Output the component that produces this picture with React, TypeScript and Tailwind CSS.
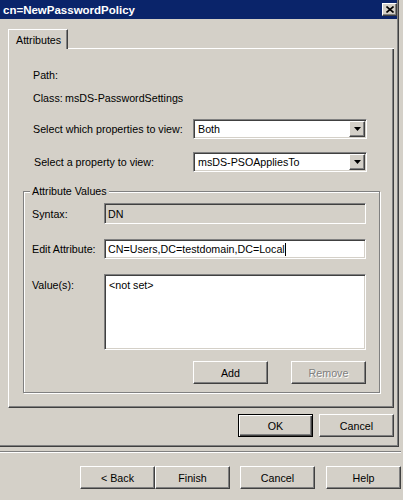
import type { ReactNode } from "react";

// Classic Win2000 chrome: raised buttons, sunken fields, etched group box
const raised =
    "border border-t-white border-l-white border-r-[#404040] border-b-[#404040] shadow-[inset_-1px_-1px_0_#808080]";
const sunken =
    "border border-t-[#808080] border-l-[#808080] border-r-white border-b-white shadow-[inset_1px_1px_0_#404040,inset_-1px_-1px_0_#d4d0c8]";

function Btn({ children, w = "w-[75px]", isDefault = false, disabled = false, className = "" }: {
    children: ReactNode;
    w?: string;
    isDefault?: boolean;
    disabled?: boolean;
    className?: string;
}) {
    const frame = isDefault
        ? "border border-black shadow-[inset_1px_1px_0_#fff,inset_-1px_-1px_0_#404040,inset_-2px_-2px_0_#808080]"
        : raised;
    return (
        <div className={`${w} h-[23px] shrink-0 flex items-center justify-center bg-[#d4d0c8] ${frame} ${className}`}>
            <span className={disabled ? "text-[#808080] [text-shadow:1px_1px_0_#fff]" : "text-black"}>{children}</span>
        </div>
    );
}

function DropArrow() {
    return (
        <svg width="7" height="4" viewBox="0 0 7 4">
            <polygon points="0,0 7,0 3.5,4" fill="#000" />
        </svg>
    );
}

function Select({ value }: { value: string }) {
    return (
        <div className={`w-[174px] h-[20px] p-[1px] bg-white flex items-center ${sunken}`}>
            <span className="flex-1 pl-[3px] leading-[14px]">{value}</span>
            <div className={`w-[16px] h-[16px] flex items-center justify-center bg-[#d4d0c8] ${raised}`}>
                <DropArrow />
            </div>
        </div>
    );
}

export default function App() {
    return (
        <div
            className="w-[403px] h-[500px] bg-[#d4d0c8] overflow-hidden text-[10.7px] leading-[14px] text-black"
            style={{ fontFamily: '"Liberation Sans", Arial, sans-serif' }}
        >
            {/* Property dialog */}
            <div className="w-[399px] h-[447px] flex flex-col border-r border-b border-[#404040] shadow-[inset_-1px_-1px_0_#808080]">
                {/* Title bar */}
                <div className="h-[19px] mr-[1px] bg-[#0a246a] flex items-center">
                    <span className="pl-[3px] text-white font-bold text-[11.5px]">cn=NewPasswordPolicy</span>
                    <div className={`ml-auto mr-[0px] w-[15px] h-[13px] flex items-center justify-center bg-[#d4d0c8] ${raised}`}>
                        <svg width="8" height="7" viewBox="0 0 8 7">
                            <path d="M0.5 0.5 L7.5 6.5 M7.5 0.5 L0.5 6.5" stroke="#000" strokeWidth="1.6" />
                        </svg>
                    </div>
                </div>

                <div className="flex flex-col pl-[8px] pt-[10px]">
                    {/* Tab strip */}
                    <div className="flex w-[386px] h-[20px]">
                        <div className="w-[60px] h-[20px] border-l border-t border-r border-l-white border-t-white border-r-[#404040] shadow-[inset_-1px_0_0_#808080] flex items-center pl-[7px]">
                            Attributes
                        </div>
                        <div className="flex-1 border-b border-white" />
                    </div>

                    {/* Tab panel */}
                    <div className="w-[386px] h-[359px] border-l border-r border-b border-l-white border-r-[#404040] border-b-[#404040] shadow-[inset_-1px_-1px_0_#808080] flex flex-col pl-[14px]">
                        <div className="pl-[10px] mt-[19px] h-[14px]">Path:</div>
                        <div className="pl-[10px] mt-[9px] h-[14px] flex">
                            <span className="w-[32px]">Class:</span>
                            <span>msDS-PasswordSettings</span>
                        </div>

                        <div className="pl-[10px] mt-[14px] flex items-center">
                            <span className="w-[160px]">Select which properties to view:</span>
                            <Select value="Both" />
                        </div>
                        <div className="pl-[10px] mt-[13px] flex items-center">
                            <span className="w-[160px] pl-[1px]">Select a property to view:</span>
                            <Select value="msDS-PSOAppliesTo" />
                        </div>

                        {/* Attribute Values group box */}
                        <fieldset className="mt-[12px] w-[357px] border border-[#808080] shadow-[inset_1px_1px_0_#fff,1px_1px_0_#fff] pl-[8px] pr-[12px] pt-[5px] pb-[8px]">
                            <legend className="ml-[-2px] px-[2px] bg-[#d4d0c8] leading-[14px]">Attribute Values</legend>

                            <div className="flex items-center">
                                <span className="w-[72px]">Syntax:</span>
                                <div className={`w-[262px] h-[21px] bg-[#d4d0c8] flex items-center pl-[3px] ${sunken}`}>DN</div>
                            </div>

                            <div className="mt-[15px] flex items-center">
                                <span className="w-[72px]">Edit Attribute:</span>
                                <div className={`w-[262px] h-[20px] bg-white flex items-center pl-[3px] ${sunken}`}>
                                    <span>CN=Users,DC=testdomain,DC=Local</span>
                                    <span className="inline-block w-[1px] h-[13px] bg-black" />
                                </div>
                            </div>

                            <div className="mt-[15px] flex items-start">
                                <span className="w-[72px] pt-[4px]">Value(s):</span>
                                <div className={`w-[262px] h-[76px] bg-white pl-[4px] pt-[3px] ${sunken}`}>&lt;not set&gt;</div>
                            </div>

                            <div className="mt-[11px] flex justify-end gap-[23px] w-[334px]">
                                <Btn>Add</Btn>
                                <Btn disabled>Remove</Btn>
                            </div>
                        </fieldset>
                    </div>

                    {/* OK / Cancel */}
                    <div className="w-[386px] mt-[6px] flex justify-end gap-[6px]">
                        <Btn isDefault>OK</Btn>
                        <Btn>Cancel</Btn>
                    </div>
                </div>
            </div>

            {/* Wizard behind the dialog */}
            <div className="mt-[4px] w-[401px] h-[2px] border-t border-b border-t-[#808080] border-b-white" />
            <div className="mt-[13px] flex pl-[80px]">
                <Btn>&lt; Back</Btn>
                <Btn>Finish</Btn>
                <Btn className="ml-[10px]">Cancel</Btn>
                <Btn className="ml-[11px]">Help</Btn>
            </div>
        </div>
    );
}
